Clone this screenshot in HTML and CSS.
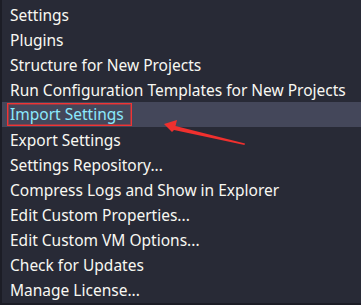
FILE: index.html
```html
<!DOCTYPE html>
<html>
<head>
<meta charset="utf-8">
<link rel="stylesheet" href="styles.css">
</head>
<body>
<div class="menu">
  <div class="item">Settings</div>
  <div class="item">Plugins</div>
  <div class="item">Structure for New Projects</div>
  <div class="item">Run Configuration Templates for New Projects</div>
  <div class="item active"><span class="mark">Import Settings</span></div>
  <div class="item">Export Settings</div>
  <div class="item">Settings Repository...</div>
  <div class="item">Compress Logs and Show in Explorer</div>
  <div class="item">Edit Custom Properties...</div>
  <div class="item">Edit Custom VM Options...</div>
  <div class="item">Check for Updates</div>
  <div class="item">Manage License...</div>
  <svg class="arrow" width="361" height="305" viewBox="0 0 361 305">
    <polygon points="164,124 177,120 175.5,126 245,143.5 244.5,145 174,130 172,132" fill="#f0302e"/>
  </svg>
</div>
</body>
</html>
```
FILE: styles.css
```css
html, body {
  margin: 0;
  padding: 0;
  background: #282a36;
}
.menu {
  position: relative;
  width: 361px;
  height: 305px;
  box-sizing: border-box;
  padding-top: 2px;
  background: #282a36;
  border-left: 2px solid #1c1d26;
  border-bottom: 2px solid #1c1d26;
  font-family: "Noto Sans", "Open Sans", sans-serif;
  font-size: 15.5px;
  color: #f8f8f2;
  overflow: hidden;
}
.item {
  display: flex;
  align-items: center;
  height: 25px;
  padding-left: 8px;
  white-space: nowrap;
}
.item.active {
  background: #44475a;
  color: #8be9fd;
  align-items: flex-start;
}
.mark {
  box-sizing: border-box;
  height: 23px;
  line-height: 21px;
  margin-left: -3px;
  margin-top: 1px;
  padding: 0 7px 0 2px;
  border: 1px solid #f03434;
  box-shadow: inset 0 0 0 1px rgba(240, 52, 52, 0.45);
}
.arrow {
  position: absolute;
  left: -2px;
  top: 0;
}
```
